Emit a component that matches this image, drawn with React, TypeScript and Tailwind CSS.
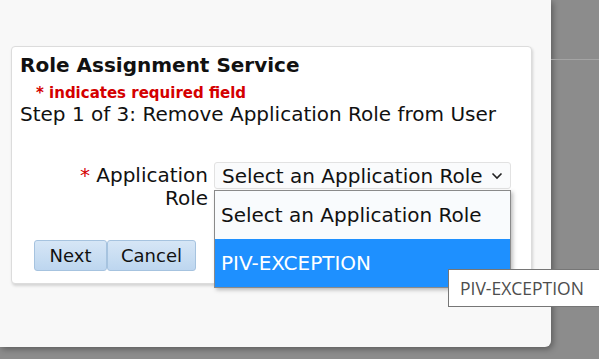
import { useState } from "react";

const ROLES = ["Select an Application Role", "PIV-EXCEPTION"];

function Chevron() {
  return (
    <svg width="12" height="8" viewBox="0 0 12 8" className="shrink-0">
      <path d="M1.5 1.5 L6 6 L10.5 1.5" fill="none" stroke="#222" strokeWidth="1.6" />
    </svg>
  );
}

export default function App() {
  const [hover] = useState(1);

  return (
    <div className="relative w-[599px] h-[359px] overflow-hidden bg-[#8c8c8c] font-['DejaVu_Sans',Verdana,sans-serif] text-[#111]">
      <div className="flex h-[347px]">
        {/* dialog */}
        <div className="w-[551px] h-[347px] bg-[#f8f8f8] rounded-br-md shadow-[2px_2px_6px_rgba(0,0,0,0.35)] pt-[46px] pl-[11px]">
          <div className="w-[521px] h-[238px] bg-white border border-[#dcdcdc] rounded shadow-[1px_2px_3px_rgba(0,0,0,0.15)] pl-[8px] pt-[6px]">
            <h2 className="text-[20px] font-bold leading-[24px]">Role Assignment Service</h2>
            <p className="text-[15px] font-bold text-[#d40000] leading-[18px] pl-[16px] mt-[7px]">
              * indicates required field
            </p>
            <p className="text-[20px] leading-[24px]">Step 1 of 3: Remove Application Role from User</p>

            <div className="flex mt-[38px]">
              <label className="w-[188px] pl-[40px] text-right text-[20px] leading-[23px]">
                <span className="text-[#d40000]">*</span> Application Role
              </label>
              <div className="ml-[6px] w-[297px] h-[27px] border border-[#e2e2e2] rounded-[3px] bg-[#fafbfc] flex items-center justify-between pl-[7px] pr-[7px] text-[20px] -mt-[2px]">
                <span>Select an Application Role</span>
                <Chevron />
              </div>
            </div>

            <div className="flex ml-[14px] mt-[30px]">
              <button className="w-[73px] h-[31px] rounded-[3px] border border-[#a6c3df] bg-gradient-to-b from-[#d6e6f6] to-[#bdd6ef] text-[18px]">
                Next
              </button>
              <button className="w-[89px] h-[31px] rounded-[3px] border border-[#a6c3df] bg-gradient-to-b from-[#d6e6f6] to-[#bdd6ef] text-[18px]">
                Cancel
              </button>
            </div>
          </div>
        </div>
        {/* backdrop strip */}
        <div className="flex-1 pt-[59px]">
          <div className="h-px bg-[#a4a4a4]" />
        </div>
      </div>

      {/* open dropdown list */}
      <ul className="absolute left-[214px] top-[190px] w-[297px] border border-[#8a8a8a] bg-white shadow-[2px_2px_4px_rgba(0,0,0,0.25)] text-[20px]">
        {ROLES.map((r, i) => (
          <li
            key={r}
            className={
              i === hover
                ? "h-[48px] flex items-center pl-[6px] bg-[#1e90ff] text-white"
                : "h-[48px] flex items-center pl-[6px] bg-[#f9fbfd]"
            }
          >
            {r}
          </li>
        ))}
      </ul>

      {/* native tooltip */}
      <div className="absolute left-[448px] top-[269px] w-[152px] h-[38px] bg-white border border-[#767676] flex items-center pl-[11px] font-['Open_Sans',sans-serif] text-[17.5px] text-[#4d4d4d]">
        PIV-EXCEPTION
      </div>
    </div>
  );
}
